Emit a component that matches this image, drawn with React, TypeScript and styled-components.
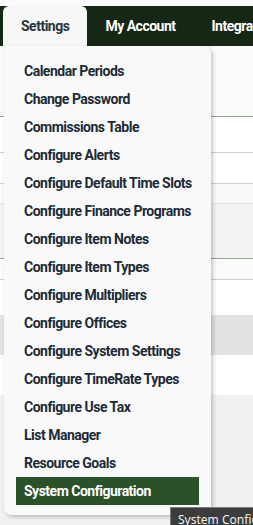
import * as React from "react";
import styled, { createGlobalStyle } from "styled-components";

const GlobalStyle = createGlobalStyle`
    html, body {
        margin: 0;
        padding: 0;
        background: #fbfbfb;
        overflow: hidden;
    }
    body {
        font-family: Roboto, "Liberation Sans", Arial, sans-serif;
    }
`

const Page = styled.div`
    position: relative;
    width: 253px;
    height: 525px;
    overflow: hidden;
    padding-top: 6px;
    box-sizing: border-box;
`

const NavBar = styled.div`
    display: flex;
    align-items: stretch;
    height: 40px;
    background: #172716;
    padding-left: 3px;
    white-space: nowrap;
`

interface ITab {
    active?: boolean;
}

const Tab = styled.div<ITab>`
    display: flex;
    align-items: center;
    padding: 0 18px;
    font-size: 14px;
    font-weight: bold;
    letter-spacing: -0.5px;
    color: ${props => props.active ? "#26363a" : "#ffffff"};
    background: ${props => props.active ? "#f7f7f7" : "transparent"};
    border-radius: ${props => props.active ? "6px 6px 0 0" : "0"};
`

interface IRow {
    height: number;
    bg: string;
    line?: string;
}

const Row = styled.div<IRow>`
    height: ${props => props.height}px;
    background: ${props => props.bg};
    border-bottom: ${props => props.line ? `1px solid ${props.line}` : "none"};
`

const Menu = styled.div`
    position: absolute;
    left: 4px;
    top: 46px;
    width: 207px;
    box-sizing: border-box;
    padding: 11px 12px 10px;
    background: #f9f9f9;
    border-radius: 0 8px 8px 8px;
    box-shadow: 2px 2px 4px rgba(0, 0, 0, 0.22);
    display: flex;
    flex-direction: column;
`

interface IItem {
    selected?: boolean;
}

const Item = styled.div<IItem>`
    height: 28px;
    display: flex;
    align-items: center;
    padding-left: 8px;
    font-size: 14px;
    font-weight: bold;
    letter-spacing: -0.5px;
    white-space: nowrap;
    color: ${props => props.selected ? "#ffffff" : "#1c2b36"};
    background: ${props => props.selected ? "#2a5128" : "transparent"};
`

const Tooltip = styled.div`
    position: absolute;
    left: 170px;
    top: 507px;
    padding: 3px 6px 4px 7px;
    background: #3c3c3c;
    border: 1px solid #7a7a7a;
    color: #f2f2f2;
    font-family: "Noto Sans", "Open Sans", sans-serif;
    font-size: 12px;
    white-space: nowrap;
`

const items = [
    "Calendar Periods",
    "Change Password",
    "Commissions Table",
    "Configure Alerts",
    "Configure Default Time Slots",
    "Configure Finance Programs",
    "Configure Item Notes",
    "Configure Item Types",
    "Configure Multipliers",
    "Configure Offices",
    "Configure System Settings",
    "Configure TimeRate Types",
    "Configure Use Tax",
    "List Manager",
    "Resource Goals",
    "System Configuration",
]

const rows: IRow[] = [
    { height: 70, bg: "#fbfbfb", line: "#8eab8c" },
    { height: 35, bg: "#ffffff", line: "#cfcfcf" },
    { height: 30, bg: "#ffffff", line: "#d2d2d2" },
    { height: 19, bg: "#fafafa", line: "#e4e4e4" },
    { height: 54, bg: "#f3f3f3", line: "#8eab8c" },
    { height: 20, bg: "#fbfbfb", line: "#cfcfcf" },
    { height: 35, bg: "#ffffff" },
    { height: 40, bg: "#e1e2e4" },
    { height: 40, bg: "#ffffff" },
    { height: 130, bg: "#f1f1f1" },
]

function App() {
    return (
        <Page>
            <GlobalStyle />
            <NavBar>
                <Tab active>Settings</Tab>
                <Tab>My Account</Tab>
                <Tab>Integrations</Tab>
            </NavBar>
            {rows.map((row, index) => (
                <Row key={index} height={row.height} bg={row.bg} line={row.line} />
            ))}
            <Menu>
                {items.map((name, index) => (
                    <Item key={index} selected={name === "System Configuration"}>{name}</Item>
                ))}
            </Menu>
            <Tooltip>System Configuration</Tooltip>
        </Page>
    )
}

export default App;
